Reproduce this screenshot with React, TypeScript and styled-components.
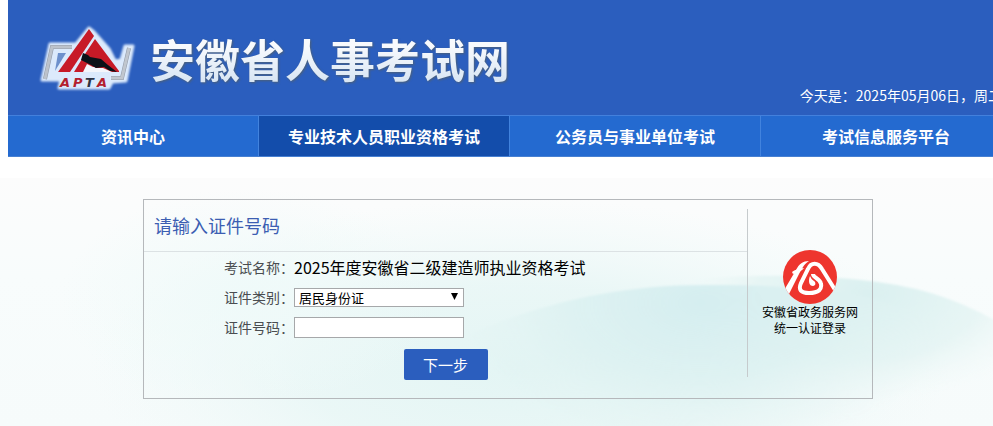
import React from "react";
import styled, { createGlobalStyle } from "styled-components";

const GlobalStyle = createGlobalStyle`
  * { box-sizing: border-box; }
  html, body, #root { height: 100%; }
  body {
    margin: 0;
    overflow-x: hidden;
    background: #fff;
    color: #000;
    font-family: "Noto Sans CJK SC", sans-serif;
    font-size: 14px;
  }
`;

const Page = styled.div`
  display: flex;
  flex-direction: column;
  min-width: 1012px;
  min-height: 100%;
`;

const Header = styled.header`
  margin-left: 8px;
  margin-bottom: 21px;
  background: #2b5ebe;
`;

const Banner = styled.div`
  display: flex;
  align-items: flex-start;
  height: 115px;
  padding: 15px 10px 10px 24px;
`;

const Brand = styled.a`
  display: flex;
  flex: 1;
  align-items: center;
  gap: 10px;
  color: #fff;
  text-decoration: none;
`;

const SiteTitle = styled.h1`
  margin: 0;
  font-size: 45px;
  line-height: 88px;
  font-weight: 700;
  white-space: nowrap;
  color: transparent;
  background: linear-gradient(#f8fafd 35%, #d9e6f4 75%);
  background-clip: text;
  -webkit-background-clip: text;
  filter: drop-shadow(1px 1px 1px #4c6077);
`;

const Today = styled.p`
  align-self: flex-end;
  margin: 0;
  color: #fff;
  font-size: 14px;
  line-height: 20px;
  white-space: nowrap;
`;

const Nav = styled.nav`
  display: grid;
  grid-template-columns: repeat(4, 1fr);
  border-top: 1px solid #4380dc;
  border-bottom: 1px solid #4780d2;
`;

const NavLink = styled.a<{ $active?: boolean }>`
  border-right: 1px solid #4283de;
  background: ${(p) => (p.$active ? "#134dab" : "#246ad0")};
  color: #fff;
  font-size: 16px;
  font-weight: 700;
  line-height: 40px;
  text-align: center;
  text-decoration: none;
`;

const Main = styled.main`
  position: relative;
  flex: 1;
  padding: 21px 4px 27px 8px;
`;

const Scenery = styled.svg`
  position: absolute;
  inset: 0;
  z-index: -1;
  width: 100%;
  height: 100%;
`;

const Card = styled.section`
  display: grid;
  grid-template-columns: 1fr 125px;
  max-width: 730px;
  min-height: 200px;
  margin: 0 auto;
  border: 1px solid #b5b8bb;
`;

const CardTitle = styled.h2`
  margin: 0;
  padding: 0 10px;
  border-bottom: 1px solid #dce2e4;
  color: #3c5eb2;
  font-size: 18px;
  font-weight: 400;
  line-height: 51px;
`;

const Row = styled.div`
  display: grid;
  grid-template-columns: 150px 1fr;
  align-items: center;
  height: 30px;
`;

const labelText = `
  color: #4a4d50;
  font-size: 14px;
  line-height: 20px;
  text-align: right;
`;

const RowLabel = styled.label`
  ${labelText}
`;

const RowCaption = styled.span`
  ${labelText}
`;

const ExamName = styled.span`
  font-size: 16px;
  line-height: 24px;
`;

const SelectWrap = styled.span`
  position: relative;
  width: 170px;
  height: 19px;
`;

const Select = styled.select`
  display: block;
  width: 100%;
  height: 100%;
  padding: 0 20px 0 4px;
  border: 1px solid #a6a8aa;
  border-radius: 0;
  appearance: none;
  background: #fff;
  color: #000;
  font-family: inherit;
  font-size: 13px;
  line-height: 17px;
`;

const Arrow = styled.svg`
  position: absolute;
  top: 5px;
  right: 6px;
  pointer-events: none;
`;

const TextInput = styled.input`
  width: 170px;
  height: 21px;
  padding: 0 4px;
  border: 1px solid #a6a8aa;
  background: #fff;
  font-family: inherit;
  font-size: 13px;
`;

const SubmitButton = styled.button`
  display: block;
  width: 84px;
  height: 31px;
  margin: 7px auto 0;
  padding: 0;
  border: 0;
  border-radius: 2px;
  background: #2b5ebe;
  color: #fff;
  font-family: inherit;
  font-size: 15px;
  line-height: 30px;
`;

const Unified = styled.a`
  display: flex;
  flex-direction: column;
  align-items: center;
  margin: 9px 0 21px;
  padding-top: 41px;
  border-left: 1px solid #c6cbcd;
  color: #000;
  font-size: 12px;
  line-height: 16px;
  text-align: center;
  text-decoration: none;
`;

const UnifiedIcon = styled.svg`
  display: block;
`;

function AptaLogo() {
  return (
    <svg width="108" height="80" viewBox="32 18 108 80" aria-label="APTA" role="img">
      <defs>
        <filter id="glow" x="-20%" y="-20%" width="140%" height="140%">
          <feGaussianBlur stdDeviation="1" />
        </filter>
      </defs>
      <path
        d="M89 27 L94 31 L109 48 L115 60 L121 59 L125 45 L133 45 L126 80 L112 81 L109 87 L59 87 L61 79 L42 79 L50 43 L76 43 Z"
        fill="#dceafc"
        stroke="#dceafc"
        strokeWidth="3"
        strokeLinejoin="round"
        filter="url(#glow)"
      />
      <path d="M45 78 L52 46 L72 46" fill="none" stroke="#929ba9" strokeWidth="4" />
      <path d="M45 78 L52 46 L72 46" fill="none" stroke="#bcc2cb" strokeWidth="3" />
      <path d="M58 52 L66 52 L55 70 Z" fill="#6d90cc" />
      <path d="M129 47 L122 77 L111 77" fill="none" stroke="#929ba9" strokeWidth="4" />
      <path d="M129 47 L122 77 L111 77" fill="none" stroke="#c0c6ce" strokeWidth="3" />
      <path d="M89 28 L94 35 L70 71 L58 71 Z" fill="#c71a27" />
      <path d="M95 38 L119 70 L119 71 L106 71 L94 66 L86 66 L84 71 L74 71 L85 53 Z" fill="#c71a27" />
      <path
        d="M83 52 L88 54 L90 56 L101 58 L108 64 L117 71 L110 70 L104 66 L96 67 L91 64 L81 59 Z"
        fill="#0b1118"
      />
      <path d="M87 63 L95 67 L103 67 L112 71 L83 71 Z" fill="#f4f6fb" />
      <g
        fill="#b3202e"
        fontFamily="DejaVu Sans, sans-serif"
        fontSize="13"
        fontWeight="700"
        fontStyle="italic"
      >
        <text y="86">
          <tspan x="60">A</tspan>
          <tspan x="73">P</tspan>
          <tspan x="85" fill="#2d3444">T</tspan>
          <tspan x="97">A</tspan>
        </text>
      </g>
    </svg>
  );
}

function ServiceLogo() {
  return (
    <UnifiedIcon width="54" height="54" viewBox="0 0 54 54" aria-hidden="true">
      <defs>
        <clipPath id="disc">
          <circle cx="27" cy="27" r="27" />
        </clipPath>
      </defs>
      <circle cx="27" cy="27" r="27" fill="#ee352e" />
      <g clipPath="url(#disc)">
        <path d="M0 42 L13 20 C16 14 20 11 26 11 C20 15 19 19 16 24 L6 44 L0 50 Z" fill="#fff" />
        <path d="M9 22 C13 19 16 19 21 18 C19 21 15 22 10 24 Z" fill="#fff" />
        <path
          d="M54 43 L39 19 C35 12 28 12 25 19 L18 33 C15 40 18 43 26 43 C36 43 39 39 38 34 C37 28 30 28 30 24"
          fill="none"
          stroke="#fff"
          strokeWidth="4"
        />
        <path d="M27 26 C25 31 26 36 30 36 C33 36 33 32 31 31 C29 30 28 28 27 26 Z" fill="#fff" />
      </g>
    </UnifiedIcon>
  );
}

function Hills() {
  return (
    <Scenery viewBox="0 0 1012 248" preserveAspectRatio="none" aria-hidden="true">
      <defs>
        <linearGradient id="sky" x1="0" y1="0" x2="0" y2="1">
          <stop offset="0" stopColor="#fcfcfc" />
          <stop offset="0.4" stopColor="#f8fcfc" />
          <stop offset="1" stopColor="#f6fbfb" />
        </linearGradient>
        <radialGradient
          id="haze"
          gradientUnits="userSpaceOnUse"
          cx="0"
          cy="0"
          r="1"
          gradientTransform="translate(520 190) scale(430 170)"
        >
          <stop offset="0" stopColor="#e3f5f4" />
          <stop offset="0.5" stopColor="#e7f6f5" stopOpacity="0.8" />
          <stop offset="1" stopColor="#eef9f8" stopOpacity="0" />
        </radialGradient>
        <radialGradient
          id="front"
          gradientUnits="userSpaceOnUse"
          cx="0"
          cy="0"
          r="1"
          gradientTransform="translate(700 125) scale(260 150)"
        >
          <stop offset="0" stopColor="#d5eef0" />
          <stop offset="0.5" stopColor="#dcf1f1" stopOpacity="0.85" />
          <stop offset="1" stopColor="#e4f4f3" stopOpacity="0" />
        </radialGradient>
        <radialGradient
          id="back"
          gradientUnits="userSpaceOnUse"
          cx="0"
          cy="0"
          r="1"
          gradientTransform="translate(870 115) scale(190 110)"
        >
          <stop offset="0" stopColor="#daf0f0" />
          <stop offset="0.6" stopColor="#e4f4f3" stopOpacity="0.8" />
          <stop offset="1" stopColor="#f0f9f8" stopOpacity="0" />
        </radialGradient>
        <radialGradient id="left" cx="0.5" cy="0.5" r="0.5">
          <stop offset="0" stopColor="#effaf9" />
          <stop offset="1" stopColor="#effaf9" stopOpacity="0" />
        </radialGradient>
        <filter id="soft">
          <feGaussianBlur stdDeviation="1" />
        </filter>
      </defs>
      <rect width="1012" height="248" fill="url(#sky)" />
      <rect width="1012" height="248" fill="url(#haze)" />
      <ellipse cx="250" cy="120" rx="190" ry="110" fill="url(#left)" />
      <g filter="url(#soft)">
        <path
          d="M640 106 C740 94 850 94 920 112 C960 123 985 136 1012 152 L1012 248 L640 248 Z"
          fill="url(#back)"
        />
        <path
          d="M440 170 C520 130 610 106 710 107 C830 107 900 118 960 160 L960 250 L440 250 Z"
          fill="url(#front)"
        />
      </g>
    </Scenery>
  );
}

const navItems = [
  { label: "资讯中心" },
  { label: "专业技术人员职业资格考试", active: true },
  { label: "公务员与事业单位考试" },
  { label: "考试信息服务平台" },
];

export default function App() {
  return (
    <>
      <GlobalStyle />
      <Page>
        <Header>
          <Banner>
            <Brand href="#">
              <AptaLogo />
              <SiteTitle>安徽省人事考试网</SiteTitle>
            </Brand>
            <Today>今天是：2025年05月06日，周二</Today>
          </Banner>
          <Nav>
            {navItems.map((item) => (
              <NavLink key={item.label} href="#" $active={item.active}>
                {item.label}
              </NavLink>
            ))}
          </Nav>
        </Header>
        <Main>
          <Hills />
          <Card>
            <form onSubmit={(e) => e.preventDefault()}>
              <CardTitle>请输入证件号码</CardTitle>
              <Row>
                <RowCaption>考试名称：</RowCaption>
                <ExamName>2025年度安徽省二级建造师执业资格考试</ExamName>
              </Row>
              <Row>
                <RowLabel htmlFor="id-type">证件类别：</RowLabel>
                <SelectWrap>
                  <Select id="id-type">
                    <option>居民身份证</option>
                  </Select>
                  <Arrow width="7" height="7" viewBox="0 0 7 7" aria-hidden="true">
                    <path d="M0 0 H7 L3.5 7 Z" fill="#000" />
                  </Arrow>
                </SelectWrap>
              </Row>
              <Row>
                <RowLabel htmlFor="id-number">证件号码：</RowLabel>
                <TextInput id="id-number" type="text" />
              </Row>
              <SubmitButton type="submit">下一步</SubmitButton>
            </form>
            <Unified href="#">
              <ServiceLogo />
              <span>安徽省政务服务网</span>
              <span>统一认证登录</span>
            </Unified>
          </Card>
        </Main>
      </Page>
    </>
  );
}
